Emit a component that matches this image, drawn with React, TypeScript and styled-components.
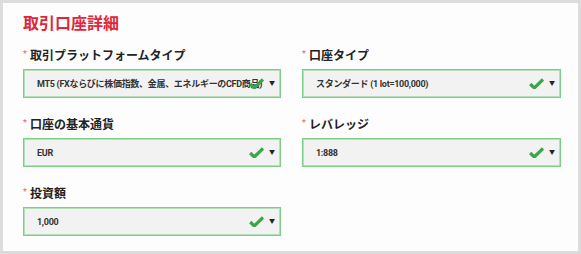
import React from 'react';
import styled, { createGlobalStyle } from 'styled-components';

const GlobalStyle = createGlobalStyle`
  html, body {
    margin: 0;
    padding: 0;
    background: #dcdcdc;
  }
  body {
    font-family: "Roboto", "Noto Sans CJK JP", sans-serif;
  }
`;

const Page = styled.div`
  width: 581px;
  height: 254px;
  padding: 3px;
  box-sizing: border-box;
`;

const Panel = styled.div`
  width: 575px;
  height: 248px;
  background: #fdfdfd;
  box-sizing: border-box;
  padding: 9px 20px 0 17px;
`;

const Title = styled.h2`
  margin: 0 0 10px 3px;
  font-size: 16px;
  line-height: 24px;
  font-weight: 700;
  color: #e0263a;
`;

const Grid = styled.div`
  display: grid;
  grid-template-columns: 258px 259px;
  column-gap: 21px;
  row-gap: 17px;
  padding-left: 3px;
`;

const Field = styled.div`
  display: flex;
  flex-direction: column;
  gap: 7px;
`;

const Label = styled.label`
  display: flex;
  align-items: center;
  gap: 3px;
  height: 16px;
  font-size: 12px;
  font-weight: 700;
  color: #222;
`;

const Star = styled.span`
  color: #e36a6a;
  font-size: 9px;
  font-weight: 400;
`;

const Select = styled.div`
  display: flex;
  align-items: center;
  height: 29px;
  box-sizing: border-box;
  border: 1px solid #7ccd88;
  box-shadow: inset 0 0 0 1px #b3e0b9;
  background: #f2f2f2;
  padding: 0 6px 0 13px;
  position: relative;
  overflow: hidden;
`;

const Value = styled.span`
  font-size: 9px;
  font-weight: 700;
  color: #333;
  white-space: nowrap;
  letter-spacing: -0.3px;
`;

const Check = styled.svg`
  position: absolute;
  right: 16px;
  top: 8px;
  width: 15px;
  height: 11px;
`;

const Arrow = styled.span`
  position: absolute;
  right: 5px;
  top: 10px;
  font-size: 6px;
  line-height: 6px;
  color: #222;
`;

const fields = [
  { label: '取引プラットフォームタイプ', value: 'MT5 (FXならびに株価指数、金属、エネルギーのCFD商品)' },
  { label: '口座タイプ', value: 'スタンダード (1 lot=100,000)' },
  { label: '口座の基本通貨', value: 'EUR' },
  { label: 'レバレッジ', value: '1:888' },
  { label: '投資額', value: '1,000' },
];

const App: React.FC = () => {
  return (
    <Page>
      <GlobalStyle />
      <Panel>
        <Title>取引口座詳細</Title>
        <Grid>
          {fields.map((f) => (
            <Field key={f.label}>
              <Label>
                <Star>*</Star>
                {f.label}
              </Label>
              <Select>
                <Value>{f.value}</Value>
                <Check viewBox="0 0 15 11">
                  <path d="M1.2 6 L5.3 10 L14 1.5" fill="none" stroke="#3aa64a" strokeWidth="3.2" strokeLinejoin="round" />
                </Check>
                <Arrow>▼</Arrow>
              </Select>
            </Field>
          ))}
        </Grid>
      </Panel>
    </Page>
  );
};

export default App;
